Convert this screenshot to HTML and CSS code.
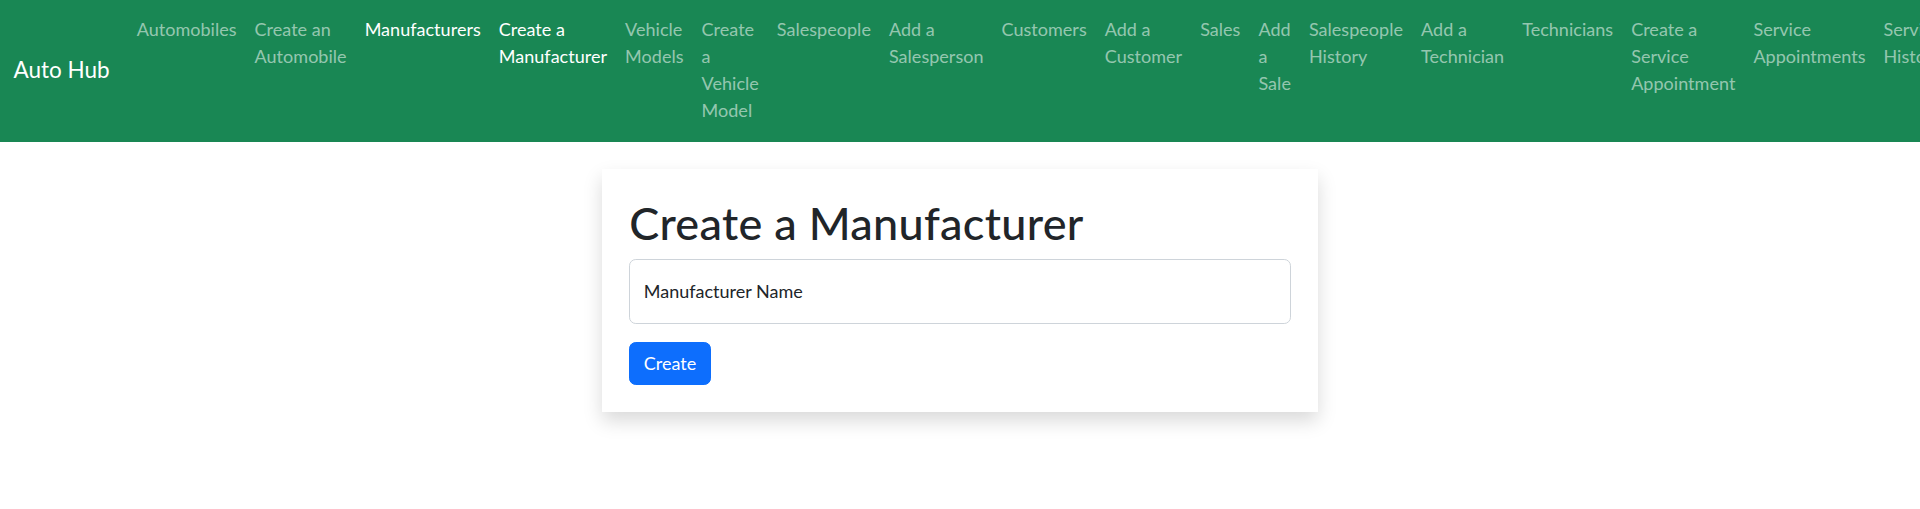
FILE: index.html
```html
<!DOCTYPE html>
<html lang="en">
<head>
<meta charset="utf-8">
<title>Auto Hub</title>
<link rel="stylesheet" href="styles.css">
</head>
<body>
<nav class="navbar">
  <div class="navbar-inner">
    <a class="brand" href="#">Auto Hub</a>
    <div class="collapse">
      <ul class="nav-list">
        <li><a class="nav-link" href="#">Automobiles</a></li>
        <li><a class="nav-link" href="#">Create an Automobile</a></li>
        <li><a class="nav-link active" href="#">Manufacturers</a></li>
        <li><a class="nav-link active" href="#">Create a Manufacturer</a></li>
        <li><a class="nav-link" href="#">Vehicle Models</a></li>
        <li><a class="nav-link" href="#">Create a Vehicle Model</a></li>
        <li><a class="nav-link" href="#">Salespeople</a></li>
        <li><a class="nav-link" href="#">Add a Salesperson</a></li>
        <li><a class="nav-link" href="#">Customers</a></li>
        <li><a class="nav-link" href="#">Add a Customer</a></li>
        <li><a class="nav-link" href="#">Sales</a></li>
        <li><a class="nav-link" href="#">Add a Sale</a></li>
        <li><a class="nav-link" href="#">Salespeople History</a></li>
        <li><a class="nav-link" href="#">Add a Technician</a></li>
        <li><a class="nav-link" href="#">Technicians</a></li>
        <li><a class="nav-link" href="#">Create a Service Appointment</a></li>
        <li><a class="nav-link" href="#">Service Appointments</a></li>
        <li><a class="nav-link" href="#">Service History</a></li>
      </ul>
    </div>
  </div>
</nav>
<main class="container">
  <div class="row">
    <div class="col">
      <div class="card">
        <h1 class="title">Create a Manufacturer</h1>
        <form class="form">
          <div class="floating">
            <input class="control" type="text" id="name" name="name" placeholder="Manufacturer Name">
            <label class="floating-label" for="name">Manufacturer Name</label>
          </div>
          <button class="btn" type="submit">Create</button>
        </form>
      </div>
    </div>
  </div>
</main>
</body>
</html>
```
FILE: styles.css
```css
* { box-sizing: border-box; }

html, body { min-height: 100%; }

body {
  margin: 0;
  min-height: 100vh;
  font-family: "Lato", "Liberation Sans", sans-serif;
  font-size: 18px;
  line-height: 27px;
  color: #212529;
  background: #fff;
}

a { text-decoration: none; }

.navbar {
  background: #198754;
  padding: 6.5px 0 9.5px;
  overflow: hidden;
}

.navbar-inner {
  display: flex;
  flex-wrap: nowrap;
  align-items: center;
  padding: 0 13.5px;
}

.brand {
  flex: 0 0 auto;
  color: #fff;
  font-size: 22.5px;
  line-height: 33.75px;
  padding: 5.6px 0;
  margin-right: 18px;
  white-space: nowrap;
}

.collapse {
  display: flex;
  flex: 1 1 auto;
}

.nav-list {
  display: flex;
  flex-direction: row;
  list-style: none;
  margin: 0;
  padding: 0;
  letter-spacing: 0.03px;
}

.nav-list li { flex: 0 1 auto; }

.nav-link {
  display: block;
  padding: 9px;
  color: rgba(255, 255, 255, 0.55);
}

.nav-link.active { color: #fff; }

.container {
  max-width: 1485px;
  margin: 0 auto;
  padding: 0 13.5px 60px;
}

.row {
  display: grid;
  grid-template-columns: repeat(4, 1fr);
  margin: 0 -13.5px;
}

.col {
  grid-column: 2 / 4;
  padding: 0 13.5px;
}

.card {
  margin-top: 27px;
  padding: 27px;
  background: #fff;
  box-shadow: 0 9px 18px rgba(0, 0, 0, 0.15);
}

.title {
  margin: 0 0 9px;
  font-size: 45px;
  line-height: 54px;
  font-weight: 500;
  letter-spacing: 0.3px;
}

.form { margin: 0; }

.floating {
  position: relative;
  margin-bottom: 18px;
}

.control {
  display: block;
  width: 100%;
  height: 65.25px;
  padding: 18px 13.5px;
  font: inherit;
  color: #212529;
  border: 1.125px solid #ced4da;
  border-radius: 6.75px;
  background: #fff;
}

.control::placeholder { color: transparent; }

.floating-label {
  position: absolute;
  top: 0;
  left: 0;
  padding: 19.1px 14.6px;
  pointer-events: none;
  color: #212529;
}

.btn {
  display: inline-block;
  font: inherit;
  color: #fff;
  background: #0d6efd;
  border: 1.125px solid #0d6efd;
  border-radius: 6.75px;
  padding: 6.75px 13.5px;
  cursor: pointer;
}
```
